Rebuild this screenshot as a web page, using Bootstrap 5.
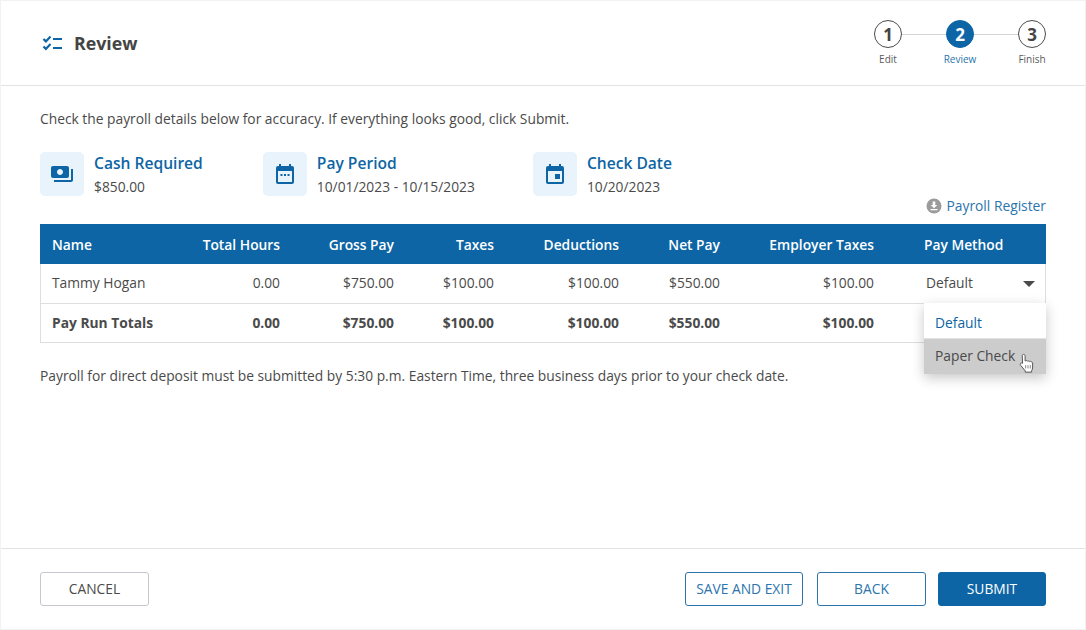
<!DOCTYPE html>
<html lang="en">
<head>
<meta charset="utf-8">
<title>Review</title>
<link href="https://cdn.jsdelivr.net/npm/bootstrap@5.3.0/dist/css/bootstrap.min.css" rel="stylesheet">
<style>
html,body{height:100%;margin:0}
body{font-family:"Open Sans","Liberation Sans",sans-serif;font-size:13.8px;color:#4a4a4a;background:#fff}
.shell{height:630px;border:1px solid #f2f2f4}
.top-bar{height:85px;border-bottom:1px solid #e3e3e3;padding:0 17px 0 39px;flex:none}
.page-title{font-size:17.8px;font-weight:700;color:#444;margin:0 0 0 11px;line-height:24px}
.step{width:72px;position:relative;padding-top:19px;height:85px}
.step-dot{width:28px;height:28px;border-radius:50%;border:1.5px solid #4a4a4a;background:#fff;font-weight:700;font-size:17px;color:#444;line-height:1;position:relative;z-index:1}
.step-dot.on{background:#0d65a5;border-color:#0d65a5;color:#fff}
.step-text{font-size:10px;margin-top:4px;color:#5a5a5a;line-height:14px}
.step-text.on{color:#2b74ac}
.step:not(:last-child)::after{content:"";position:absolute;left:50px;width:44px;top:33px;border-top:1px solid #d4d4d4}
.content{padding:0 39px}
.lead-text{margin:24px 0 0;line-height:18px}
.stats{margin-top:24px}
.stat-one{margin-right:60px}
.stat-two{margin-right:58px}
.tile{width:44px;height:44px;background:#e8f3fc;border-radius:5px;margin-right:10px}
.stat-title{font-size:15.6px;font-weight:600;color:#0d65a5;line-height:22px}
.stat-value{line-height:18px;margin-top:4px}
.register{color:#2b74ac;text-decoration:none;line-height:18px;gap:5px}
.register-row{margin-top:1px}
.pay-table{width:1006px;table-layout:fixed;border-collapse:separate;border-spacing:0;margin:9px 0 0}
.pay-table th{background:#0d65a5;color:#fff;font-weight:600;height:40px;padding:2px 12px 0;border:0;vertical-align:middle}
.pay-table td{height:40px;padding:0 12px;vertical-align:middle;color:#4a4a4a;border-bottom:1px solid #dedede;background:#fff}
.pay-table .sum td{height:39px;padding-top:1px}
.pay-table tr td:first-child{border-left:1px solid #dedede;padding-left:11px}
.pay-table tr td:last-child{border-right:1px solid #dedede}
.pay-table th:last-child{padding-left:38px}
.pay-table td:last-child{padding-left:40px;padding-right:10px;position:relative}
.pay-table .sum td{font-weight:700}
.caret-down{width:0;height:0;border-left:6px solid transparent;border-right:6px solid transparent;border-top:6px solid #4a4a4a}
.pay-menu{position:absolute;left:38px;top:39px;width:122px;min-width:0;padding:0;margin:0;border:0;border-radius:0;box-shadow:0 4px 12px rgba(0,0,0,.22);z-index:5;font-size:13.8px;display:block}
.pay-menu .dropdown-item{height:35px;line-height:39px;padding:0 11px;color:#0d65a5}
.pay-menu .dropdown-item.hov{height:36px;line-height:33px;background:#ccc;color:#4a4a4a;border-top:1px solid #e3e3e3;position:relative}
.hand{position:absolute;left:94px;top:14px}
.note{margin:24px 0 0;line-height:18px}
.bottom-bar{border-top:1px solid #e3e3e3;height:81px;padding:23px 39px 0;flex:none}
.act{height:34px;width:109px;font-size:13.8px;border-radius:3px;padding:0;text-transform:uppercase;background:#fff;line-height:32px}
.act-gray{border:1px solid #c6c6cf;color:#4a4a4a}
.act-line{border:1px solid #2b74ac;color:#2b74ac}
.act-wide{width:118px;margin-right:14px}
.act-back{margin-right:12px}
.act-fill{border:1px solid #0d65a5;background:#0d65a5;color:#fff;width:108px}
</style>
</head>
<body>
<div class="shell d-flex flex-column">
  <header class="top-bar d-flex align-items-center justify-content-between">
    <div class="d-flex align-items-center">
      <svg width="23" height="16" viewBox="0 0 23 16" fill="none" stroke="#0d65a5" stroke-width="2.2"><path d="M3.5 4l2.4 2.4L10.5 1.6M3.5 11.5l2.4 2.4L10.5 9.1M13 4h9M13 13h9"/></svg>
      <h1 class="page-title">Review</h1>
    </div>
    <div class="d-flex align-self-start">
      <div class="step d-flex flex-column align-items-center"><div class="step-dot d-flex align-items-center justify-content-center">1</div><div class="step-text">Edit</div></div>
      <div class="step d-flex flex-column align-items-center"><div class="step-dot on d-flex align-items-center justify-content-center">2</div><div class="step-text on">Review</div></div>
      <div class="step d-flex flex-column align-items-center"><div class="step-dot d-flex align-items-center justify-content-center">3</div><div class="step-text">Finish</div></div>
    </div>
  </header>
  <main class="content flex-grow-1">
    <p class="lead-text">Check the payroll details below for accuracy. If everything looks good, click Submit.</p>
    <div class="stats d-flex">
      <div class="stat-one d-flex">
        <div class="tile d-flex align-items-center justify-content-center"><svg width="24" height="24" viewBox="0 0 24 24" fill="#0d65a5"><path d="M19 14V6c0-1.1-.9-2-2-2H3c-1.1 0-2 .9-2 2v8c0 1.1.9 2 2 2h14c1.1 0 2-.9 2-2zm-9-1c-1.66 0-3-1.34-3-3s1.34-3 3-3 3 1.34 3 3-1.34 3-3 3zm13-6v11c0 1.1-.9 2-2 2H4v-2h17V7h2z"/></svg></div>
        <div><div class="stat-title">Cash Required</div><div class="stat-value">$850.00</div></div>
      </div>
      <div class="stat-two d-flex">
        <div class="tile d-flex align-items-center justify-content-center"><svg width="24" height="24" viewBox="0 0 24 24" fill="#0d65a5"><path d="M19 4h-1V2h-2v2H8V2H6v2H5c-1.1 0-2 .9-2 2v14c0 1.1.9 2 2 2h14c1.1 0 2-.9 2-2V6c0-1.1-.9-2-2-2zm0 16H5V9h14v11z"/><path d="M7.5 12h2v2h-2zM11 12h2v2h-2zM14.5 12h2v2h-2z"/></svg></div>
        <div><div class="stat-title">Pay Period</div><div class="stat-value">10/01/2023 - 10/15/2023</div></div>
      </div>
      <div class="d-flex">
        <div class="tile d-flex align-items-center justify-content-center"><svg width="24" height="24" viewBox="0 0 24 24" fill="#0d65a5"><path d="M19 4h-1V2h-2v2H8V2H6v2H5c-1.1 0-2 .9-2 2v14c0 1.1.9 2 2 2h14c1.1 0 2-.9 2-2V6c0-1.1-.9-2-2-2zm0 16H5V9h14v11z"/><path d="M12 12h5v5h-5z"/></svg></div>
        <div><div class="stat-title">Check Date</div><div class="stat-value">10/20/2023</div></div>
      </div>
    </div>
    <div class="register-row d-flex justify-content-end">
      <a class="register d-flex align-items-center" href="#"><svg width="16" height="16" viewBox="0 0 16 16"><circle cx="8" cy="8" r="7.5" fill="#9b9b9b"/><path d="M6.7 3.5h2.6v3.6h2L8 10.2 4.7 7.1h2zM4.5 11h7v1.3h-7z" fill="#fff"/></svg>Payroll Register</a>
    </div>
    <table class="pay-table">
      <colgroup><col style="width:132px"><col style="width:120px"><col style="width:114px"><col style="width:100px"><col style="width:125px"><col style="width:101px"><col style="width:154px"><col style="width:160px"></colgroup>
      <thead><tr><th>Name</th><th class="text-end">Total Hours</th><th class="text-end">Gross Pay</th><th class="text-end">Taxes</th><th class="text-end">Deductions</th><th class="text-end">Net Pay</th><th class="text-end">Employer Taxes</th><th>Pay Method</th></tr></thead>
      <tbody>
        <tr><td>Tammy Hogan</td><td class="text-end">0.00</td><td class="text-end">$750.00</td><td class="text-end">$100.00</td><td class="text-end">$100.00</td><td class="text-end">$550.00</td><td class="text-end">$100.00</td>
          <td><div class="d-flex align-items-center justify-content-between"><span>Default</span><span class="caret-down"></span></div>
            <div class="dropdown-menu pay-menu show">
              <a class="dropdown-item" href="#">Default</a>
              <a class="dropdown-item hov" href="#">Paper Check<svg class="hand" width="18" height="21" viewBox="0 0 16 19"><path d="M5 1.2c.8 0 1.3.6 1.3 1.4v4.6l.3-.1c.6-.4 1.4-.2 1.7.3.5-.4 1.3-.3 1.7.3.6-.4 1.4-.2 1.7.4.6-.2 1.3.2 1.4 1v3.6c0 1.5-.3 2.4-.9 3.3v1.3H6.4v-1.2L2.3 11.2c-.6-.7-.5-1.5 0-1.9.6-.5 1.3-.3 1.7.1l-.3-6.8c0-.8.5-1.4 1.3-1.4z" fill="#fff" stroke="#555" stroke-width=".9" stroke-linejoin="round"/><path d="M6.8 11v3M8.9 11v3M11 11v3" stroke="#777" stroke-width=".8"/></svg></a>
            </div></td></tr>
        <tr class="sum"><td>Pay Run Totals</td><td class="text-end">0.00</td><td class="text-end">$750.00</td><td class="text-end">$100.00</td><td class="text-end">$100.00</td><td class="text-end">$550.00</td><td class="text-end">$100.00</td><td></td></tr>
      </tbody>
    </table>
    <p class="note">Payroll for direct deposit must be submitted by 5:30 p.m. Eastern Time, three business days prior to your check date.</p>
  </main>
  <footer class="bottom-bar d-flex justify-content-between align-items-start">
    <button class="btn act act-gray">Cancel</button>
    <div class="d-flex">
      <button class="btn act act-line act-wide">Save and Exit</button>
      <button class="btn act act-line act-back">Back</button>
      <button class="btn act act-fill">Submit</button>
    </div>
  </footer>
</div>
<script src="https://cdn.jsdelivr.net/npm/bootstrap@5.3.0/dist/js/bootstrap.bundle.min.js"></script>
</body>
</html>
